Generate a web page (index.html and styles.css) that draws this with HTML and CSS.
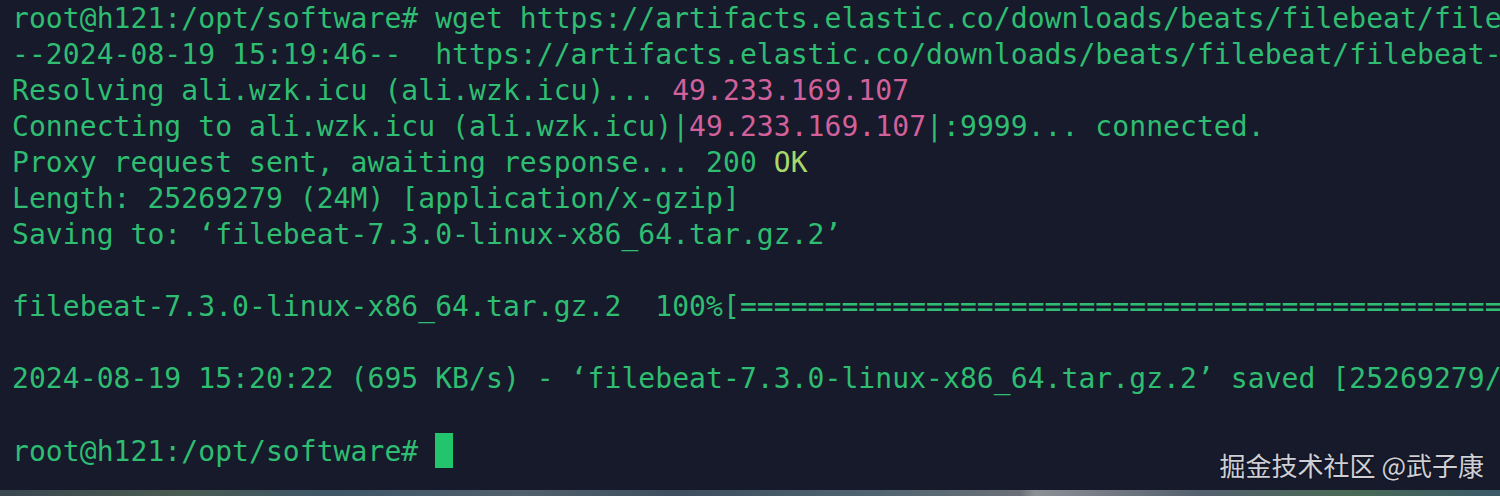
FILE: index.html
```html
<!DOCTYPE html>
<html>
  <head>
    <title>filebeat download</title>
    <meta name="viewport" content="width=device-width, initial-scale=1" />
    <link rel="stylesheet" href="styles.css">
  </head>
  <body>
    <div class="term">
      <div class="line">root@h121:/opt/software# wget https://artifacts.elastic.co/downloads/beats/filebeat/file</div>
      <div class="line">--2024-08-19 15:19:46--  https://artifacts.elastic.co/downloads/beats/filebeat/filebeat-</div>
      <div class="line">Resolving ali.wzk.icu (ali.wzk.icu)... <span class="ip">49.233.169.107</span></div>
      <div class="line">Connecting to ali.wzk.icu (ali.wzk.icu)|<span class="ip">49.233.169.107</span>|:9999... connected.</div>
      <div class="line">Proxy request sent, awaiting response... 200 <span class="ok">OK</span></div>
      <div class="line">Length: 25269279 (24M) [application/x-gzip]</div>
      <div class="line">Saving to: ‘filebeat-7.3.0-linux-x86_64.tar.gz.2’</div>
      <div class="line"> </div>
      <div class="line">filebeat-7.3.0-linux-x86_64.tar.gz.2  100%[=============================================</div>
      <div class="line"> </div>
      <div class="line">2024-08-19 15:20:22 (695 KB/s) - ‘filebeat-7.3.0-linux-x86_64.tar.gz.2’ saved [25269279/</div>
      <div class="line"> </div>
      <div class="line">root@h121:/opt/software# <span class="cursor"></span></div>
    </div>
    <div class="desktop"></div>
    <div class="watermark">掘金技术社区 @武子康</div>
  </body>
</html>
```

FILE: styles.css
```css
html, body {
  margin: 0;
  height: 100%;
  overflow: hidden;
}
body {
  position: relative;
  background-color: #161a2b;
  display: flex;
  flex-direction: column;
}
/* terminal output */
.term {
  flex: 1;
  padding: 1px 0 0 12px;
  font-family: "DejaVu Sans Mono", monospace;
  font-size: 28px;
  letter-spacing: 0.07px;
  line-height: 36px;
  color: #2fbd72;
  overflow: hidden;
}
.line {
  white-space: pre;
  height: 36px;
}
.ip {
  color: #d2609a;
}
.ok {
  color: #a8d86a;
}
.cursor {
  display: inline-block;
  width: 18px;
  height: 35px;
  background-color: #22c46c;
  vertical-align: -7px;
}
/* blurred desktop strip under the window */
.desktop {
  height: 6px;
  background: linear-gradient(to right, #3a4650 0%, #4b5c52 12%, #3e5668 22%, #52606c 35%, #3d4e5e 45%, #4f6470 58%, #6b7078 68%, #8d8f96 69%, #54606e 80%, #4a6a56 90%, #3b5a6a 100%);
}
.watermark {
  position: absolute;
  right: 16px;
  bottom: 16px;
  font-family: "Noto Sans CJK SC", sans-serif;
  font-size: 26px;
  line-height: 30px;
  color: rgba(235, 235, 240, 0.88);
  text-shadow: 0 0 2px rgba(0, 0, 0, 0.6);
}
```
